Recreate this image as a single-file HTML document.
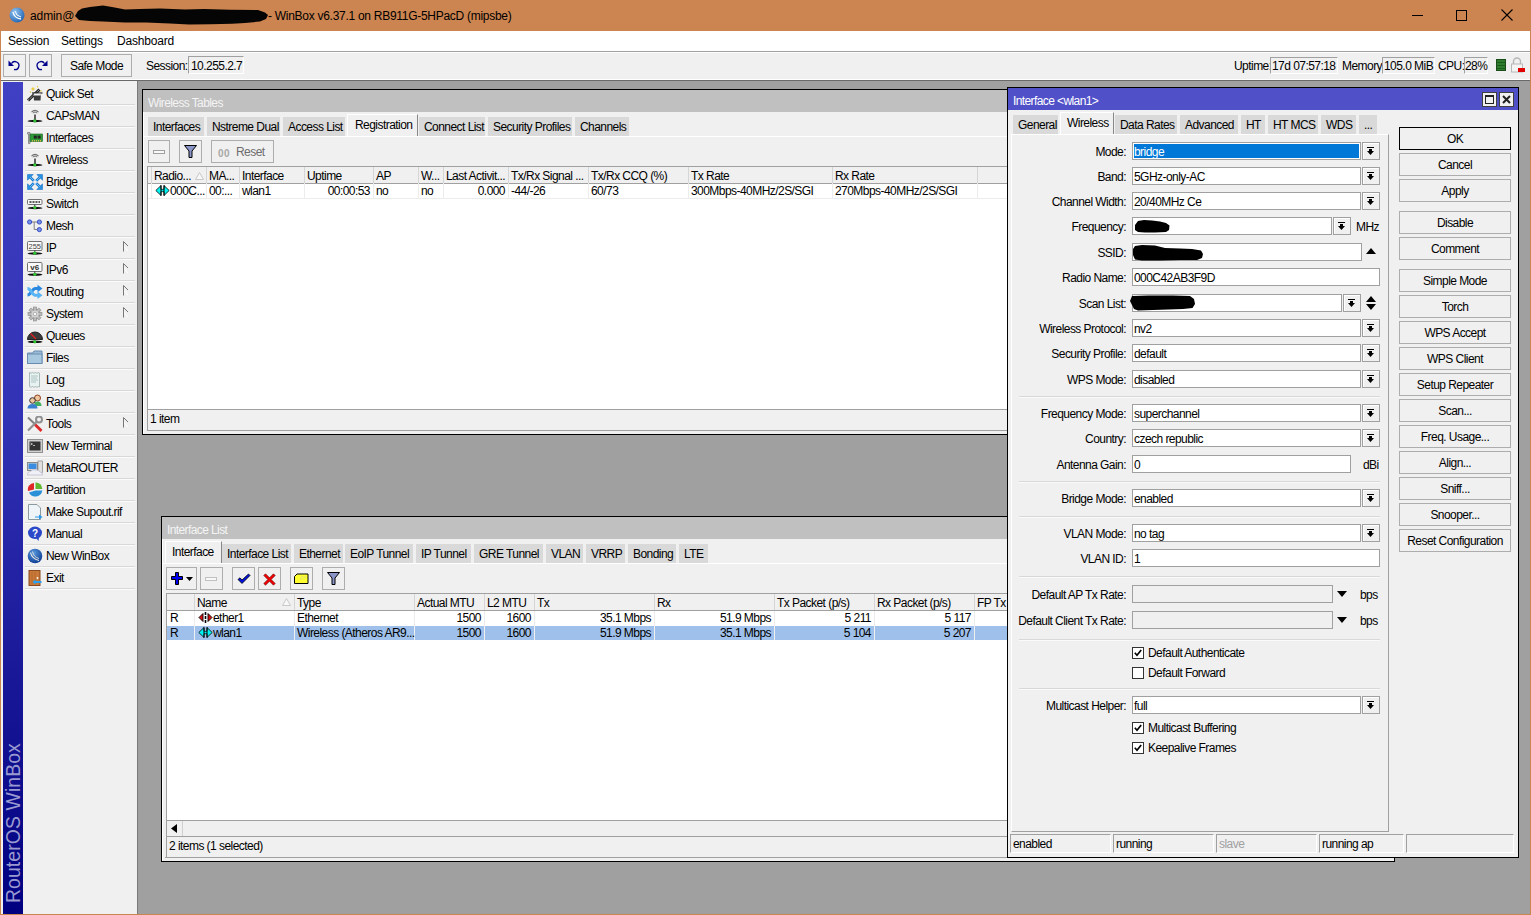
<!DOCTYPE html><html><head><meta charset="utf-8"><style>
*{box-sizing:border-box}
html,body{margin:0;padding:0}
body{width:1531px;height:915px;position:relative;overflow:hidden;background:#a0a0a0;font-family:"Liberation Sans",sans-serif;font-size:11px;color:#000}
.a{position:absolute}
.t{white-space:nowrap;line-height:13px;font-size:12px;letter-spacing:-0.55px}
.btn{background:#f0f0f0;border:1px solid #adadad}
.fld{background:#fff;border:1px solid #a0a0a0}
.sunk{background:#f0f0f0;border:1px solid #a0a0a0;border-right-color:#fff;border-bottom-color:#fff}
.tab{background:#d9d9d9;border-right:1px solid #f0f0f0}
.atab{background:#f0f0f0;border-left:1px solid #fff;border-top:1px solid #fff;border-right:1px solid #888}
.hc{background:#f0f0f0;border-right:1px solid #d5d5d5;border-bottom:1px solid #a0a0a0}
</style></head><body>
<div class="a " style="left:0px;top:0px;width:1531px;height:915px;background:#cc8450"></div>
<div class="a " style="left:1px;top:31px;width:1529px;height:883px;background:#f0f0f0"></div>
<svg class="a" style="left:9px;top:7px" width="16" height="16" viewBox="0 0 16 16"><defs><radialGradient id="wb" cx="0.35" cy="0.3" r="0.8"><stop offset="0" stop-color="#8fc3f0"/><stop offset="1" stop-color="#1b5fb0"/></radialGradient></defs><circle cx="8" cy="8" r="7.5" fill="url(#wb)"/><path d="M4 5 Q5 11 12 12" stroke="#fff" stroke-width="1.3" fill="none"/><path d="M6 4 Q7 9 12 10" stroke="#fff" stroke-width="1" fill="none"/></svg>
<div class="a t " style="left:30px;top:9px;font-size:12px;line-height:14px;color:#000;letter-spacing:-0.1px">admin@</div>
<svg class="a" style="left:0;top:0" width="280" height="31"><path d="M75 16 L78 11 L82 8.5 L90 7 L103 5.5 L112 7 L125 9.5 L140 9 L160 8.5 L185 9.5 L204 9 L230 9.8 L258 10 L265 12.5 L268 15 L266 19 L260 21.5 L245 23 L232 23.8 L210 24.2 L189 24.4 L170 23.5 L146 22.5 L125 22.5 L103 21.5 L90 21 L79 20 Z" fill="#050505"/></svg>
<div class="a t " style="left:268px;top:9px;font-size:12px;line-height:14px;color:#000;letter-spacing:-0.28px">- WinBox v6.37.1 on RB911G-5HPacD (mipsbe)</div>
<div class="a" style="left:1412px;top:15px;width:11px;height:1px;background:#000"></div>
<div class="a" style="left:1456px;top:10px;width:11px;height:11px;border:1px solid #000"></div>
<svg class="a" style="left:1501px;top:9px" width="12" height="12"><path d="M0.5 0.5L11.5 11.5M11.5 0.5L0.5 11.5" stroke="#000" stroke-width="1.1"/></svg>
<div class="a " style="left:1px;top:31px;width:1529px;height:20px;background:#fff"></div>
<div class="a " style="left:1px;top:51px;width:1529px;height:1px;background:#a0a0a0"></div>
<div class="a " style="left:1px;top:52px;width:1529px;height:1px;background:#fff"></div>
<div class="a t " style="left:8px;top:34px;font-size:12px;line-height:14px;letter-spacing:-0.2px">Session</div>
<div class="a t " style="left:61px;top:34px;font-size:12px;line-height:14px;letter-spacing:-0.2px">Settings</div>
<div class="a t " style="left:117px;top:34px;font-size:12px;line-height:14px;letter-spacing:-0.2px">Dashboard</div>
<div class="a " style="left:1px;top:53px;width:1529px;height:27px;background:#f0f0f0"></div>
<div class="a " style="left:1px;top:79px;width:1529px;height:1px;background:#fff"></div>
<div class="a " style="left:1px;top:80px;width:1529px;height:1px;background:#696969"></div>
<div class="a btn" style="left:3px;top:54px;width:23px;height:23px;"></div>
<div class="a btn" style="left:29px;top:54px;width:23px;height:23px;"></div>
<svg class="a" style="left:8px;top:59px" width="14" height="13" viewBox="0 0 14 13"><path d="M3.5 4.5 A4 4 0 1 1 6 10.5" stroke="#00008b" stroke-width="1.3" fill="none"/><path d="M0.5 1.5 L0.5 7 L6 7 Z" fill="#00008b"/></svg>
<svg class="a" style="left:34px;top:59px" width="14" height="13" viewBox="0 0 14 13"><path d="M10.5 4.5 A4 4 0 1 0 8 10.5" stroke="#00008b" stroke-width="1.3" fill="none"/><path d="M13.5 1.5 L13.5 7 L8 7 Z" fill="#00008b"/></svg>
<div class="a btn" style="left:61px;top:54px;width:71px;height:23px;"></div>
<div class="a t " style="left:70px;top:60px;">Safe Mode</div>
<div class="a t " style="left:146px;top:60px;">Session:</div>
<div class="a sunk" style="left:188px;top:56px;width:56px;height:18px;"></div>
<div class="a t " style="left:191px;top:60px;">10.255.2.7</div>
<div class="a t " style="left:1234px;top:60px;">Uptime:</div>
<div class="a sunk" style="left:1270px;top:57px;width:68px;height:17px;"></div>
<div class="a t " style="left:1272px;top:60px;">17d 07:57:18</div>
<div class="a t " style="left:1342px;top:60px;">Memory:</div>
<div class="a sunk" style="left:1382px;top:57px;width:53px;height:17px;"></div>
<div class="a t " style="left:1384px;top:60px;">105.0 MiB</div>
<div class="a t " style="left:1438px;top:60px;">CPU:</div>
<div class="a sunk" style="left:1464px;top:57px;width:24px;height:17px;"></div>
<div class="a t " style="left:1465px;top:60px;">28%</div>
<div class="a" style="left:1496px;top:59px;width:10px;height:12px;background:repeating-linear-gradient(#2e7d2e 0 2px,#1b5e1b 2px 3px);border:1px solid #1a4d1a"></div>
<svg class="a" style="left:1510px;top:57px" width="15" height="16" viewBox="0 0 15 16"><path d="M3.5 7 V4.5 A3.5 3.5 0 0 1 10.5 4.5 V7" stroke="#b8b8b8" stroke-width="1.4" fill="none"/><rect x="1.5" y="7" width="11" height="8" fill="#f4f4f4" stroke="#b8b8b8"/><rect x="8" y="11" width="7" height="4" fill="#e00000"/></svg>
<div class="a " style="left:1px;top:81px;width:136px;height:833px;background:#f0f0f0"></div>
<div class="a " style="left:137px;top:81px;width:1px;height:833px;background:#7a7a7a"></div>
<div class="a" style="left:3px;top:82px;width:20px;height:832px;background:linear-gradient(#4040c4,#3232b4 40%,#000080)"></div>
<div class="a t" style="left:2px;top:903px;transform-origin:0 0;transform:rotate(-90deg);font-size:19.4px;line-height:22px;color:#9a9ad0;letter-spacing:0.1px">RouterOS WinBox</div>
<div class="a t " style="left:46px;top:88px;">Quick Set</div>
<div class="a " style="left:25px;top:104px;width:110px;height:1px;background:#d8d8d8"></div>
<div class="a " style="left:25px;top:105px;width:110px;height:1px;background:#fbfbfb"></div>
<svg class="a" style="left:27px;top:86px" width="16" height="16" viewBox="0 0 16 16"><path d="M1 14.5 L12.5 3.5" stroke="#222" stroke-width="3"/><path d="M1 14.5 L12.5 3.5" stroke="#eee" stroke-width="1" stroke-dasharray="1.2 1.2"/><path d="M5 7 H15.5" stroke="#222" stroke-width="1.2"/><path d="M6.5 7.5 H14 L13.5 14.5 H7 Z" fill="#3a3a3a"/><rect x="6.8" y="7.5" width="7" height="2" fill="#f4f4f4"/><path d="M6 0.5 L6.7 2.3 L8.5 3 L6.7 3.7 L6 5.5 L5.3 3.7 L3.5 3 L5.3 2.3 Z" fill="#e8c830"/><circle cx="10.5" cy="0.8" r="0.7" fill="#e8c830"/><circle cx="14" cy="5" r="0.7" fill="#e8c830"/><circle cx="3.5" cy="6" r="0.8" fill="#e8c830"/></svg>
<div class="a t " style="left:46px;top:110px;">CAPsMAN</div>
<div class="a " style="left:25px;top:126px;width:110px;height:1px;background:#d8d8d8"></div>
<div class="a " style="left:25px;top:127px;width:110px;height:1px;background:#fbfbfb"></div>
<svg class="a" style="left:27px;top:108px" width="16" height="16" viewBox="0 0 16 16"><path d="M4.5 4.2 Q8 0.5 11.5 4.2" stroke="#707070" stroke-width="1.1" fill="none"/><path d="M5.8 5 Q8 3 10.2 5" stroke="#707070" stroke-width="1" fill="none"/><rect x="7" y="6.5" width="2" height="6" fill="#606060"/><ellipse cx="8" cy="13" rx="7.5" ry="1.2" fill="#111"/><circle cx="7.8" cy="12.8" r="1.6" fill="#2ec42e"/></svg>
<div class="a t " style="left:46px;top:132px;">Interfaces</div>
<div class="a " style="left:25px;top:148px;width:110px;height:1px;background:#d8d8d8"></div>
<div class="a " style="left:25px;top:149px;width:110px;height:1px;background:#fbfbfb"></div>
<svg class="a" style="left:27px;top:130px" width="16" height="16" viewBox="0 0 16 16"><path d="M0.5 2.5 H3 V13.5 H1.5 V4 H0.5 Z" fill="#c8c8c8" stroke="#707070" stroke-width="0.7"/><rect x="3" y="4" width="12.5" height="7.5" fill="#2e9a3a" stroke="#1a6020" stroke-width="0.6"/><rect x="6.8" y="5.6" width="3" height="3" fill="#222"/><rect x="10.6" y="5.6" width="3" height="3" fill="#222"/><path d="M5 10.8 H14.5" stroke="#d8b840" stroke-width="1.4" stroke-dasharray="1 1"/></svg>
<div class="a t " style="left:46px;top:154px;">Wireless</div>
<div class="a " style="left:25px;top:170px;width:110px;height:1px;background:#d8d8d8"></div>
<div class="a " style="left:25px;top:171px;width:110px;height:1px;background:#fbfbfb"></div>
<svg class="a" style="left:27px;top:152px" width="16" height="16" viewBox="0 0 16 16"><path d="M4.5 4.2 Q8 0.5 11.5 4.2" stroke="#707070" stroke-width="1.1" fill="none"/><path d="M5.8 5 Q8 3 10.2 5" stroke="#707070" stroke-width="1" fill="none"/><rect x="7" y="6.5" width="2" height="6" fill="#606060"/><ellipse cx="8" cy="13" rx="7.5" ry="1.2" fill="#111"/><circle cx="7.8" cy="12.8" r="1.6" fill="#2ec42e"/></svg>
<div class="a t " style="left:46px;top:176px;">Bridge</div>
<div class="a " style="left:25px;top:192px;width:110px;height:1px;background:#d8d8d8"></div>
<div class="a " style="left:25px;top:193px;width:110px;height:1px;background:#fbfbfb"></div>
<svg class="a" style="left:27px;top:174px" width="16" height="16" viewBox="0 0 16 16"><g transform=""><path d="M6.8 6.8 L2.8 2.8" stroke="#1a78d0" stroke-width="2.6"/><path d="M0.5 0.5 H6.2 L0.5 6.2 Z" fill="#2a90e0" stroke="#1a70c8" stroke-width="0.6"/><path d="M6.6 6.6 L3 3" stroke="#6cc4f8" stroke-width="1"/></g><g transform="translate(16,0) scale(-1,1)"><path d="M6.8 6.8 L2.8 2.8" stroke="#1a78d0" stroke-width="2.6"/><path d="M0.5 0.5 H6.2 L0.5 6.2 Z" fill="#2a90e0" stroke="#1a70c8" stroke-width="0.6"/><path d="M6.6 6.6 L3 3" stroke="#6cc4f8" stroke-width="1"/></g><g transform="translate(0,16) scale(1,-1)"><path d="M6.8 6.8 L2.8 2.8" stroke="#1a78d0" stroke-width="2.6"/><path d="M0.5 0.5 H6.2 L0.5 6.2 Z" fill="#2a90e0" stroke="#1a70c8" stroke-width="0.6"/><path d="M6.6 6.6 L3 3" stroke="#6cc4f8" stroke-width="1"/></g><g transform="translate(16,16) scale(-1,-1)"><path d="M6.8 6.8 L2.8 2.8" stroke="#1a78d0" stroke-width="2.6"/><path d="M0.5 0.5 H6.2 L0.5 6.2 Z" fill="#2a90e0" stroke="#1a70c8" stroke-width="0.6"/><path d="M6.6 6.6 L3 3" stroke="#6cc4f8" stroke-width="1"/></g></svg>
<div class="a t " style="left:46px;top:198px;">Switch</div>
<div class="a " style="left:25px;top:214px;width:110px;height:1px;background:#d8d8d8"></div>
<div class="a " style="left:25px;top:215px;width:110px;height:1px;background:#fbfbfb"></div>
<svg class="a" style="left:27px;top:196px" width="16" height="16" viewBox="0 0 16 16"><rect x="0.5" y="3.5" width="14.5" height="5" rx="1" fill="#f8f8f8" stroke="#707070"/><path d="M2.5 6 H13" stroke="#222" stroke-width="1.3" stroke-dasharray="2 1"/><rect x="7.3" y="8.5" width="1" height="3" fill="#333"/><ellipse cx="8" cy="12" rx="7.5" ry="1.2" fill="#111"/><circle cx="7.8" cy="11.5" r="1.6" fill="#2ec42e"/></svg>
<div class="a t " style="left:46px;top:220px;">Mesh</div>
<div class="a " style="left:25px;top:236px;width:110px;height:1px;background:#d8d8d8"></div>
<div class="a " style="left:25px;top:237px;width:110px;height:1px;background:#fbfbfb"></div>
<svg class="a" style="left:27px;top:218px" width="16" height="16" viewBox="0 0 16 16"><path d="M4.5 4 H10.5 M7.2 4 V11.5 H10.5" stroke="#808080" stroke-width="1" fill="none"/><g fill="#7890e8" stroke="#2a44c0" stroke-width="0.9"><circle cx="2.6" cy="4" r="2.1"/><circle cx="12.4" cy="4" r="2.1"/><circle cx="12.4" cy="11.6" r="2.1"/></g></svg>
<div class="a t " style="left:46px;top:242px;">IP</div>
<div class="a " style="left:25px;top:258px;width:110px;height:1px;background:#d8d8d8"></div>
<div class="a " style="left:25px;top:259px;width:110px;height:1px;background:#fbfbfb"></div>
<svg class="a" style="left:123px;top:241px" width="6" height="11"><path d="M0.5 5 L5 10" stroke="#fff" stroke-width="1"/><path d="M0.5 10.5 V0.5 L5 5" stroke="#777" stroke-width="1" fill="none"/></svg>
<svg class="a" style="left:27px;top:240px" width="16" height="16" viewBox="0 0 16 16"><rect x="0.5" y="1.5" width="14.5" height="9" rx="1" fill="#fafafa" stroke="#707070"/><text x="7.8" y="9" font-family="Liberation Sans" font-size="7.5" text-anchor="middle" fill="#444">255</text><rect x="7.3" y="10.5" width="1" height="2" fill="#333"/><ellipse cx="8" cy="13.5" rx="7.5" ry="1.2" fill="#111"/><circle cx="7.8" cy="13.2" r="1.6" fill="#2ec42e"/></svg>
<div class="a t " style="left:46px;top:264px;">IPv6</div>
<div class="a " style="left:25px;top:280px;width:110px;height:1px;background:#d8d8d8"></div>
<div class="a " style="left:25px;top:281px;width:110px;height:1px;background:#fbfbfb"></div>
<svg class="a" style="left:123px;top:263px" width="6" height="11"><path d="M0.5 5 L5 10" stroke="#fff" stroke-width="1"/><path d="M0.5 10.5 V0.5 L5 5" stroke="#777" stroke-width="1" fill="none"/></svg>
<svg class="a" style="left:27px;top:262px" width="16" height="16" viewBox="0 0 16 16"><rect x="0.5" y="0.5" width="14.5" height="9" rx="1" fill="#fafafa" stroke="#707070"/><text x="7.8" y="8" font-family="Liberation Sans" font-size="8" font-weight="bold" text-anchor="middle" fill="#333">v6</text><rect x="7.3" y="9.5" width="1" height="2" fill="#333"/><ellipse cx="8" cy="12.6" rx="7.5" ry="1.2" fill="#111"/><circle cx="7.8" cy="12.3" r="1.6" fill="#2ec42e"/></svg>
<div class="a t " style="left:46px;top:286px;">Routing</div>
<div class="a " style="left:25px;top:302px;width:110px;height:1px;background:#d8d8d8"></div>
<div class="a " style="left:25px;top:303px;width:110px;height:1px;background:#fbfbfb"></div>
<svg class="a" style="left:123px;top:285px" width="6" height="11"><path d="M0.5 5 L5 10" stroke="#fff" stroke-width="1"/><path d="M0.5 10.5 V0.5 L5 5" stroke="#777" stroke-width="1" fill="none"/></svg>
<svg class="a" style="left:27px;top:284px" width="16" height="16" viewBox="0 0 16 16"><path d="M0.5 11 C4 11 5 5 8 4.5 L11 4.5" stroke="#2a88e0" stroke-width="3" fill="none"/><path d="M0.5 4.5 C4 4.5 5 11 8 11.2 L11 11.2" stroke="#58b4f4" stroke-width="3" fill="none"/><path d="M10.5 0.8 L15.5 4.5 L10.5 8.2 Z" fill="#2a88e0"/><path d="M10.5 7.5 L15.5 11.2 L10.5 14.9 Z" fill="#58b4f4"/></svg>
<div class="a t " style="left:46px;top:308px;">System</div>
<div class="a " style="left:25px;top:324px;width:110px;height:1px;background:#d8d8d8"></div>
<div class="a " style="left:25px;top:325px;width:110px;height:1px;background:#fbfbfb"></div>
<svg class="a" style="left:123px;top:307px" width="6" height="11"><path d="M0.5 5 L5 10" stroke="#fff" stroke-width="1"/><path d="M0.5 10.5 V0.5 L5 5" stroke="#777" stroke-width="1" fill="none"/></svg>
<svg class="a" style="left:27px;top:306px" width="16" height="16" viewBox="0 0 16 16"><g transform="translate(8,8)"><g fill="#b8b8b8" stroke="#8a8a8a" stroke-width="0.6"><circle r="5.2"/><rect x="-1.6" y="-7" width="3.2" height="14"/><rect x="-1.6" y="-7" width="3.2" height="14" transform="rotate(45)"/><rect x="-1.6" y="-7" width="3.2" height="14" transform="rotate(90)"/><rect x="-1.6" y="-7" width="3.2" height="14" transform="rotate(135)"/></g><circle r="3.6" fill="#d8d8d8"/><circle r="1.8" fill="#f8f8f8" stroke="#888" stroke-width="0.6"/></g></svg>
<div class="a t " style="left:46px;top:330px;">Queues</div>
<div class="a " style="left:25px;top:346px;width:110px;height:1px;background:#d8d8d8"></div>
<div class="a " style="left:25px;top:347px;width:110px;height:1px;background:#fbfbfb"></div>
<svg class="a" style="left:27px;top:328px" width="16" height="16" viewBox="0 0 16 16"><path d="M0.5 11.5 A7.5 7.5 0 0 1 15.5 11.5 Z" fill="#3a3a3a" stroke="#222"/><path d="M3.5 5.5 L9 11" stroke="#e02020" stroke-width="1.3"/><ellipse cx="8" cy="13.8" rx="7.5" ry="1.2" fill="#111"/><circle cx="7.8" cy="13.8" r="1.6" fill="#2ec42e"/></svg>
<div class="a t " style="left:46px;top:352px;">Files</div>
<div class="a " style="left:25px;top:368px;width:110px;height:1px;background:#d8d8d8"></div>
<div class="a " style="left:25px;top:369px;width:110px;height:1px;background:#fbfbfb"></div>
<svg class="a" style="left:27px;top:350px" width="16" height="16" viewBox="0 0 16 16"><path d="M0.5 3 H6 L7 1 H15 V13.5 H0.5 Z" fill="#9bbcd8" stroke="#6a8cb0"/><rect x="0.5" y="4" width="14.5" height="9.5" fill="#a8c8e0" stroke="#6a8cb0"/></svg>
<div class="a t " style="left:46px;top:374px;">Log</div>
<div class="a " style="left:25px;top:390px;width:110px;height:1px;background:#d8d8d8"></div>
<div class="a " style="left:25px;top:391px;width:110px;height:1px;background:#fbfbfb"></div>
<svg class="a" style="left:27px;top:372px" width="16" height="16" viewBox="0 0 16 16"><path d="M2.5 0.5 L4 1.3 L5.5 0.5 L7 1.3 L8.5 0.5 L10 1.3 L11.5 0.5 L12.5 1 V15 L11.5 14.5 L10 15.3 L8.5 14.5 L7 15.3 L5.5 14.5 L4 15.3 L2.5 14.5 Z" fill="#e8f2f0" stroke="#8aa0a0" stroke-width="0.7"/><path d="M4 4 H11 M4 6 H10 M4 8 H11 M4 10 H9" stroke="#a0b8b8" stroke-width="0.8"/></svg>
<div class="a t " style="left:46px;top:396px;">Radius</div>
<div class="a " style="left:25px;top:412px;width:110px;height:1px;background:#d8d8d8"></div>
<div class="a " style="left:25px;top:413px;width:110px;height:1px;background:#fbfbfb"></div>
<svg class="a" style="left:27px;top:394px" width="16" height="16" viewBox="0 0 16 16"><circle cx="10.5" cy="4" r="3" fill="#f0c8a0" stroke="#904020" stroke-width="1"/><path d="M7 12 Q7 7.5 10.5 7.5 Q14.5 7.5 14.5 12 Z" fill="#40b060"/><circle cx="5.5" cy="6.5" r="2.8" fill="#f0c8a0" stroke="#303030" stroke-width="1"/><path d="M0.5 14.5 Q0.5 10 5.5 10 Q10.5 10 10.5 14.5 Z" fill="#3a80d0"/></svg>
<div class="a t " style="left:46px;top:418px;">Tools</div>
<div class="a " style="left:25px;top:434px;width:110px;height:1px;background:#d8d8d8"></div>
<div class="a " style="left:25px;top:435px;width:110px;height:1px;background:#fbfbfb"></div>
<svg class="a" style="left:123px;top:417px" width="6" height="11"><path d="M0.5 5 L5 10" stroke="#fff" stroke-width="1"/><path d="M0.5 10.5 V0.5 L5 5" stroke="#777" stroke-width="1" fill="none"/></svg>
<svg class="a" style="left:27px;top:416px" width="16" height="16" viewBox="0 0 16 16"><path d="M1 1.5 L14 14" stroke="#808080" stroke-width="2"/><path d="M8 8.5 L14.5 15" stroke="#e02828" stroke-width="2.8"/><path d="M1 14.5 L10.5 5" stroke="#909090" stroke-width="2.2"/><circle cx="12" cy="3.5" r="3" fill="none" stroke="#909090" stroke-width="2"/></svg>
<div class="a t " style="left:46px;top:440px;">New Terminal</div>
<div class="a " style="left:25px;top:456px;width:110px;height:1px;background:#d8d8d8"></div>
<div class="a " style="left:25px;top:457px;width:110px;height:1px;background:#fbfbfb"></div>
<svg class="a" style="left:27px;top:438px" width="16" height="16" viewBox="0 0 16 16"><rect x="0.5" y="1.5" width="15" height="13" fill="#d0d0d0" stroke="#909090"/><rect x="2.5" y="3.5" width="11" height="9" fill="#333"/><path d="M3.5 5 L5.5 6 L3.5 7 M6 7.5 H8" stroke="#eee" stroke-width="0.7" fill="none"/></svg>
<div class="a t " style="left:46px;top:462px;">MetaROUTER</div>
<div class="a " style="left:25px;top:478px;width:110px;height:1px;background:#d8d8d8"></div>
<div class="a " style="left:25px;top:479px;width:110px;height:1px;background:#fbfbfb"></div>
<svg class="a" style="left:27px;top:460px" width="16" height="16" viewBox="0 0 16 16"><rect x="0.5" y="2.5" width="10" height="8" fill="#d8d8d8" stroke="#888"/><rect x="1.5" y="3.5" width="8" height="5.5" fill="#3a8ce0"/><rect x="11" y="1" width="4.5" height="11.5" fill="#e0e0e0" stroke="#888" stroke-width="0.7"/><path d="M0.5 15 Q0 11.5 3.5 11.5 Q5 9 8.5 10 Q12 9.5 13 12 Q16 12 15.5 15 Z" fill="#f0f0f8" stroke="#b8b8c8" stroke-width="0.7"/></svg>
<div class="a t " style="left:46px;top:484px;">Partition</div>
<div class="a " style="left:25px;top:500px;width:110px;height:1px;background:#d8d8d8"></div>
<div class="a " style="left:25px;top:501px;width:110px;height:1px;background:#fbfbfb"></div>
<svg class="a" style="left:27px;top:482px" width="16" height="16" viewBox="0 0 16 16"><path d="M7 1 A6.5 6.5 0 0 0 1 9 L7 7.5 Z" fill="#e02828"/><path d="M8.5 0.5 A6.5 6.5 0 0 1 15.3 7 L8.5 7 Z" fill="#60b830"/><path d="M15.3 8.5 A7 7 0 0 1 2 10.5 L8.5 8.5 Z" fill="#2a90d8"/></svg>
<div class="a t " style="left:46px;top:506px;">Make Supout.rif</div>
<div class="a " style="left:25px;top:522px;width:110px;height:1px;background:#d8d8d8"></div>
<div class="a " style="left:25px;top:523px;width:110px;height:1px;background:#fbfbfb"></div>
<svg class="a" style="left:27px;top:504px" width="16" height="16" viewBox="0 0 16 16"><path d="M1.5 0.5 H10 L13.5 4 V15.5 H1.5 Z" fill="#eef4f8" stroke="#8a9aa0"/><path d="M8 12.5 H12 V10.5 L15.5 13 L12 15.5 V13.5 H8 Z" fill="#2a98e8"/></svg>
<div class="a t " style="left:46px;top:528px;">Manual</div>
<div class="a " style="left:25px;top:544px;width:110px;height:1px;background:#d8d8d8"></div>
<div class="a " style="left:25px;top:545px;width:110px;height:1px;background:#fbfbfb"></div>
<svg class="a" style="left:27px;top:526px" width="16" height="16" viewBox="0 0 16 16"><ellipse cx="8" cy="6.8" rx="7" ry="6.2" fill="#2a48c8"/><path d="M9 12 L11.5 15 L12 11" fill="#2a48c8"/><text x="8" y="10.5" font-family="Liberation Sans" font-size="10" font-weight="bold" text-anchor="middle" fill="#fff">?</text></svg>
<div class="a t " style="left:46px;top:550px;">New WinBox</div>
<div class="a " style="left:25px;top:566px;width:110px;height:1px;background:#d8d8d8"></div>
<div class="a " style="left:25px;top:567px;width:110px;height:1px;background:#fbfbfb"></div>
<svg class="a" style="left:27px;top:548px" width="16" height="16" viewBox="0 0 16 16"><defs><radialGradient id="wb2" cx="0.4" cy="0.3" r="0.75"><stop offset="0" stop-color="#5a9ae0"/><stop offset="1" stop-color="#0a3a90"/></radialGradient></defs><circle cx="8" cy="8" r="7.3" fill="url(#wb2)"/><path d="M3.5 4.5 Q5 11 12 12.5" stroke="#f0e8e0" stroke-width="1.1" fill="none"/><path d="M5.5 3.5 Q6.5 9 12 10.5" stroke="#e8e0d8" stroke-width="0.9" fill="none"/></svg>
<div class="a t " style="left:46px;top:572px;">Exit</div>
<div class="a " style="left:25px;top:588px;width:110px;height:1px;background:#d8d8d8"></div>
<div class="a " style="left:25px;top:589px;width:110px;height:1px;background:#fbfbfb"></div>
<svg class="a" style="left:27px;top:570px" width="16" height="16" viewBox="0 0 16 16"><rect x="2" y="0.5" width="11" height="15" fill="#c87838" stroke="#8a4a20"/><path d="M5 2 V14 M8 2 V14" stroke="#b06828" stroke-width="0.8"/><circle cx="10.5" cy="8" r="0.9" fill="#fff"/><path d="M5.5 12 L8.5 9.5 V11 H14.5 V13 H8.5 V14.5 Z" fill="#2aa0f0"/></svg>
<div class="a " style="left:138px;top:81px;width:1392px;height:833px;background:#a0a0a0"></div>
<div class="a " style="left:142px;top:89px;width:1000px;height:346px;background:#000"></div>
<div class="a " style="left:143px;top:90px;width:998px;height:344px;background:#fff"></div>
<div class="a " style="left:144px;top:91px;width:997px;height:343px;background:#f0f0f0"></div>
<div class="a " style="left:143px;top:90px;width:998px;height:22px;background:#c0c0c0"></div>
<div class="a t " style="left:148px;top:96px;color:#f4f4f4;font-size:12px;line-height:14px;letter-spacing:-0.6px">Wireless Tables</div>
<div class="a tab" style="left:148px;top:117px;width:57px;height:19px;"></div>
<div class="a t " style="left:153px;top:121px;">Interfaces</div>
<div class="a tab" style="left:207px;top:117px;width:74px;height:19px;"></div>
<div class="a t " style="left:212px;top:121px;">Nstreme Dual</div>
<div class="a tab" style="left:283px;top:117px;width:63px;height:19px;"></div>
<div class="a t " style="left:288px;top:121px;">Access List</div>
<div class="a atab" style="left:347px;top:114px;width:71px;height:23px;"></div>
<div class="a t " style="left:355px;top:119px;">Registration</div>
<div class="a tab" style="left:419px;top:117px;width:67px;height:19px;"></div>
<div class="a t " style="left:424px;top:121px;">Connect List</div>
<div class="a tab" style="left:488px;top:117px;width:85px;height:19px;"></div>
<div class="a t " style="left:493px;top:121px;">Security Profiles</div>
<div class="a tab" style="left:575px;top:117px;width:55px;height:19px;"></div>
<div class="a t " style="left:580px;top:121px;">Channels</div>
<div class="a " style="left:144px;top:136px;width:864px;height:1px;background:#fff"></div>
<div class="a btn" style="left:148px;top:140px;width:22px;height:23px;"></div>
<div class="a" style="left:153px;top:150px;width:12px;height:4px;border:1px solid #a0a0a0;background:#f8f8f8"></div>
<div class="a btn" style="left:179px;top:140px;width:23px;height:23px;"></div>
<svg class="a" style="left:184px;top:145px" width="13" height="13" viewBox="0 0 13 13"><path d="M0.5 0.5 H12.5 L8 6 V12.5 H5 V6 Z" fill="#8a96c8" stroke="#000" stroke-width="1"/></svg>
<div class="a btn" style="left:211px;top:140px;width:63px;height:23px;"></div>
<div class="a t " style="left:218px;top:147px;"><b style="color:#a8a8a8;font-size:10px;letter-spacing:0.5px">00</b></div>
<div class="a t " style="left:236px;top:146px;color:#6d6d6d">Reset</div>
<div class="a " style="left:147px;top:166px;width:861px;height:244px;background:#fff;border-top:1px solid #a0a0a0;border-left:1px solid #a0a0a0"></div>
<div class="a " style="left:148px;top:167px;width:860px;height:17px;background:#f0f0f0;border-bottom:1px solid #a0a0a0"></div>
<div class="a " style="left:151px;top:167px;width:1px;height:16px;background:#d5d5d5"></div>
<div class="a " style="left:206px;top:167px;width:1px;height:16px;background:#d5d5d5"></div>
<div class="a t " style="left:154px;top:170px;">Radio...</div>
<div class="a " style="left:206px;top:183px;width:1px;height:15px;background:#ececec"></div>
<div class="a " style="left:239px;top:167px;width:1px;height:16px;background:#d5d5d5"></div>
<div class="a t " style="left:209px;top:170px;">MA...</div>
<div class="a " style="left:239px;top:183px;width:1px;height:15px;background:#ececec"></div>
<div class="a " style="left:304px;top:167px;width:1px;height:16px;background:#d5d5d5"></div>
<div class="a t " style="left:242px;top:170px;">Interface</div>
<div class="a " style="left:304px;top:183px;width:1px;height:15px;background:#ececec"></div>
<div class="a " style="left:373px;top:167px;width:1px;height:16px;background:#d5d5d5"></div>
<div class="a t " style="left:307px;top:170px;">Uptime</div>
<div class="a " style="left:373px;top:183px;width:1px;height:15px;background:#ececec"></div>
<div class="a " style="left:418px;top:167px;width:1px;height:16px;background:#d5d5d5"></div>
<div class="a t " style="left:376px;top:170px;">AP</div>
<div class="a " style="left:418px;top:183px;width:1px;height:15px;background:#ececec"></div>
<div class="a " style="left:443px;top:167px;width:1px;height:16px;background:#d5d5d5"></div>
<div class="a t " style="left:421px;top:170px;">W...</div>
<div class="a " style="left:443px;top:183px;width:1px;height:15px;background:#ececec"></div>
<div class="a " style="left:508px;top:167px;width:1px;height:16px;background:#d5d5d5"></div>
<div class="a t " style="left:446px;top:170px;">Last Activit...</div>
<div class="a " style="left:508px;top:183px;width:1px;height:15px;background:#ececec"></div>
<div class="a " style="left:588px;top:167px;width:1px;height:16px;background:#d5d5d5"></div>
<div class="a t " style="left:511px;top:170px;">Tx/Rx Signal ...</div>
<div class="a " style="left:588px;top:183px;width:1px;height:15px;background:#ececec"></div>
<div class="a " style="left:688px;top:167px;width:1px;height:16px;background:#d5d5d5"></div>
<div class="a t " style="left:591px;top:170px;">Tx/Rx CCQ (%)</div>
<div class="a " style="left:688px;top:183px;width:1px;height:15px;background:#ececec"></div>
<div class="a " style="left:832px;top:167px;width:1px;height:16px;background:#d5d5d5"></div>
<div class="a t " style="left:691px;top:170px;">Tx Rate</div>
<div class="a " style="left:832px;top:183px;width:1px;height:15px;background:#ececec"></div>
<div class="a " style="left:977px;top:167px;width:1px;height:16px;background:#d5d5d5"></div>
<div class="a t " style="left:835px;top:170px;">Rx Rate</div>
<div class="a " style="left:977px;top:183px;width:1px;height:15px;background:#ececec"></div>
<div class="a " style="left:1100px;top:167px;width:1px;height:16px;background:#d5d5d5"></div>
<div class="a t " style="left:980px;top:170px;"></div>
<div class="a " style="left:1100px;top:183px;width:1px;height:15px;background:#ececec"></div>
<div class="a " style="left:151px;top:183px;width:1px;height:15px;background:#ececec"></div>
<div class="a " style="left:148px;top:198px;width:860px;height:1px;background:#ececec"></div>
<svg class="a" style="left:195px;top:172px" width="9" height="8"><path d="M4.5 0.5 L8.5 7.5 H0.5 Z" fill="#f8f8f8" stroke="#c8c8c8"/></svg>
<div class="a t " style="left:170px;top:185px;">000C...</div>
<div class="a t " style="left:209px;top:185px;">00:...</div>
<div class="a t " style="left:242px;top:185px;">wlan1</div>
<div class="a t" style="left:304px;top:185px;width:66px;text-align:right">00:00:53</div>
<div class="a t " style="left:376px;top:185px;">no</div>
<div class="a t " style="left:421px;top:185px;">no</div>
<div class="a t" style="left:443px;top:185px;width:62px;text-align:right">0.000</div>
<div class="a t " style="left:511px;top:185px;">-44/-26</div>
<div class="a t " style="left:591px;top:185px;">60/73</div>
<div class="a t " style="left:691px;top:185px;">300Mbps-40MHz/2S/SGI</div>
<div class="a t " style="left:835px;top:185px;">270Mbps-40MHz/2S/SGI</div>
<div class="a t " style="left:980px;top:185px;"></div>
<svg class="a" style="left:155px;top:185px" width="15" height="11" viewBox="0 0 15 11"><path d="M0.8 5.5 L6 0.5 V10.5 Z M14.2 5.5 L9 0.5 V10.5 Z" fill="#00f4f4" stroke="#000" stroke-width="0.8"/><path d="M5 4.2 H10 V6.8 H5 Z" fill="#00f4f4"/><path d="M6 4.3 H9 M6 6.7 H9" stroke="#000" stroke-width="0.7"/><path d="M6 0.3 V10.7 M9 0.3 V10.7" stroke="#000" stroke-width="1"/></svg>
<div class="a " style="left:147px;top:409px;width:861px;height:1px;background:#a0a0a0"></div>
<div class="a t " style="left:150px;top:413px;">1 item</div>
<div class="a " style="left:147px;top:430px;width:861px;height:1px;background:#a0a0a0"></div>
<div class="a " style="left:147px;top:166px;width:1px;height:264px;background:#a0a0a0"></div>
<div class="a " style="left:161px;top:516px;width:1234px;height:346px;background:#000"></div>
<div class="a " style="left:162px;top:517px;width:1232px;height:344px;background:#fff"></div>
<div class="a " style="left:163px;top:518px;width:1231px;height:343px;background:#f0f0f0"></div>
<div class="a " style="left:162px;top:517px;width:1232px;height:22px;background:#c0c0c0"></div>
<div class="a t " style="left:167px;top:523px;color:#f4f4f4;font-size:12px;line-height:14px;letter-spacing:-0.6px">Interface List</div>
<div class="a atab" style="left:165px;top:541px;width:57px;height:23px;"></div>
<div class="a t " style="left:172px;top:546px;">Interface</div>
<div class="a tab" style="left:222px;top:544px;width:70px;height:19px;"></div>
<div class="a t " style="left:227px;top:548px;">Interface List</div>
<div class="a tab" style="left:294px;top:544px;width:50px;height:19px;"></div>
<div class="a t " style="left:299px;top:548px;">Ethernet</div>
<div class="a tab" style="left:345px;top:544px;width:69px;height:19px;"></div>
<div class="a t " style="left:350px;top:548px;">EoIP Tunnel</div>
<div class="a tab" style="left:416px;top:544px;width:56px;height:19px;"></div>
<div class="a t " style="left:421px;top:548px;">IP Tunnel</div>
<div class="a tab" style="left:474px;top:544px;width:70px;height:19px;"></div>
<div class="a t " style="left:479px;top:548px;">GRE Tunnel</div>
<div class="a tab" style="left:546px;top:544px;width:38px;height:19px;"></div>
<div class="a t " style="left:551px;top:548px;">VLAN</div>
<div class="a tab" style="left:586px;top:544px;width:40px;height:19px;"></div>
<div class="a t " style="left:591px;top:548px;">VRRP</div>
<div class="a tab" style="left:628px;top:544px;width:49px;height:19px;"></div>
<div class="a t " style="left:633px;top:548px;">Bonding</div>
<div class="a tab" style="left:679px;top:544px;width:30px;height:19px;"></div>
<div class="a t " style="left:684px;top:548px;">LTE</div>
<div class="a " style="left:163px;top:563px;width:1230px;height:1px;background:#fff"></div>
<div class="a btn" style="left:166px;top:567px;width:31px;height:23px;"></div>
<div class="a btn" style="left:200px;top:567px;width:23px;height:23px;"></div>
<div class="a btn" style="left:232px;top:567px;width:23px;height:23px;"></div>
<div class="a btn" style="left:258px;top:567px;width:23px;height:23px;"></div>
<div class="a btn" style="left:290px;top:567px;width:23px;height:23px;"></div>
<div class="a btn" style="left:322px;top:567px;width:23px;height:23px;"></div>
<svg class="a" style="left:171px;top:572px" width="23" height="14" viewBox="0 0 23 14"><path d="M4.5 0.5 H7.5 V4.5 H11.5 V7.5 H7.5 V12.5 H4.5 V7.5 H0.5 V4.5 H4.5 Z" fill="#0000f0" stroke="#000" stroke-width="1"/><path d="M15 5 H22 L18.5 9 Z" fill="#000"/></svg>
<div class="a" style="left:205px;top:577px;width:12px;height:4px;border:1px solid #c0c0c0;background:#f8f8f8"></div>
<svg class="a" style="left:237px;top:573px" width="14" height="12" viewBox="0 0 14 12"><path d="M1 6.5 L3 4.8 L5 7 L11.5 1 L13 2.5 L5 10.5 Z" fill="#0010e0" stroke="#000" stroke-width="0.8"/></svg>
<svg class="a" style="left:263px;top:573px" width="13" height="13" viewBox="0 0 13 13"><path d="M0.8 2.5 L2.5 0.8 L6.5 4.8 L10.5 0.8 L12.2 2.5 L8.2 6.5 L12.2 10.5 L10.5 12.2 L6.5 8.2 L2.5 12.2 L0.8 10.5 L4.8 6.5 Z" fill="#f00000" stroke="#600" stroke-width="0.6"/></svg>
<svg class="a" style="left:294px;top:573px" width="15" height="12" viewBox="0 0 15 12"><path d="M0.5 3.5 L3 1 H14 V10.5 H0.5 Z" fill="#ffff30" stroke="#000" stroke-width="1"/><path d="M7 4 H12 M6 6 H10" stroke="#c8c8a0" stroke-width="0.8" stroke-dasharray="2 1"/></svg>
<svg class="a" style="left:327px;top:572px" width="13" height="13" viewBox="0 0 13 13"><path d="M0.5 0.5 H12.5 L8 6 V12.5 H5 V6 Z" fill="#8a96c8" stroke="#000" stroke-width="1"/></svg>
<div class="a " style="left:166px;top:593px;width:1228px;height:228px;background:#fff;border-top:1px solid #a0a0a0;border-left:1px solid #a0a0a0"></div>
<div class="a " style="left:167px;top:594px;width:1226px;height:17px;background:#f0f0f0;border-bottom:1px solid #a0a0a0"></div>
<div class="a " style="left:194px;top:594px;width:1px;height:16px;background:#d5d5d5"></div>
<div class="a t " style="left:170px;top:597px;"></div>
<div class="a " style="left:294px;top:594px;width:1px;height:16px;background:#d5d5d5"></div>
<div class="a t " style="left:197px;top:597px;">Name</div>
<div class="a " style="left:414px;top:594px;width:1px;height:16px;background:#d5d5d5"></div>
<div class="a t " style="left:297px;top:597px;">Type</div>
<div class="a " style="left:484px;top:594px;width:1px;height:16px;background:#d5d5d5"></div>
<div class="a t " style="left:417px;top:597px;">Actual MTU</div>
<div class="a " style="left:534px;top:594px;width:1px;height:16px;background:#d5d5d5"></div>
<div class="a t " style="left:487px;top:597px;">L2 MTU</div>
<div class="a " style="left:654px;top:594px;width:1px;height:16px;background:#d5d5d5"></div>
<div class="a t " style="left:537px;top:597px;">Tx</div>
<div class="a " style="left:774px;top:594px;width:1px;height:16px;background:#d5d5d5"></div>
<div class="a t " style="left:657px;top:597px;">Rx</div>
<div class="a " style="left:874px;top:594px;width:1px;height:16px;background:#d5d5d5"></div>
<div class="a t " style="left:777px;top:597px;">Tx Packet (p/s)</div>
<div class="a " style="left:974px;top:594px;width:1px;height:16px;background:#d5d5d5"></div>
<div class="a t " style="left:877px;top:597px;">Rx Packet (p/s)</div>
<div class="a " style="left:1100px;top:594px;width:1px;height:16px;background:#d5d5d5"></div>
<div class="a t " style="left:977px;top:597px;">FP Tx</div>
<div class="a " style="left:1393px;top:594px;width:1px;height:16px;background:#d5d5d5"></div>
<div class="a t " style="left:1103px;top:597px;"></div>
<svg class="a" style="left:282px;top:598px" width="9" height="8"><path d="M4.5 0.5 L8.5 7.5 H0.5 Z" fill="#f8f8f8" stroke="#c8c8c8"/></svg>
<div class="a " style="left:194px;top:611px;width:1px;height:15px;background:#ececec"></div>
<div class="a t " style="left:170px;top:612px;">R</div>
<div class="a " style="left:294px;top:611px;width:1px;height:15px;background:#ececec"></div>
<div class="a t " style="left:213px;top:612px;">ether1</div>
<div class="a " style="left:414px;top:611px;width:1px;height:15px;background:#ececec"></div>
<div class="a t " style="left:297px;top:612px;">Ethernet</div>
<div class="a " style="left:484px;top:611px;width:1px;height:15px;background:#ececec"></div>
<div class="a t" style="left:414px;top:612px;width:67px;text-align:right">1500</div>
<div class="a " style="left:534px;top:611px;width:1px;height:15px;background:#ececec"></div>
<div class="a t" style="left:484px;top:612px;width:47px;text-align:right">1600</div>
<div class="a " style="left:654px;top:611px;width:1px;height:15px;background:#ececec"></div>
<div class="a t" style="left:534px;top:612px;width:117px;text-align:right">35.1 Mbps</div>
<div class="a " style="left:774px;top:611px;width:1px;height:15px;background:#ececec"></div>
<div class="a t" style="left:654px;top:612px;width:117px;text-align:right">51.9 Mbps</div>
<div class="a " style="left:874px;top:611px;width:1px;height:15px;background:#ececec"></div>
<div class="a t" style="left:774px;top:612px;width:97px;text-align:right">5 211</div>
<div class="a " style="left:974px;top:611px;width:1px;height:15px;background:#ececec"></div>
<div class="a t" style="left:874px;top:612px;width:97px;text-align:right">5 117</div>
<div class="a " style="left:1100px;top:611px;width:1px;height:15px;background:#ececec"></div>
<div class="a t " style="left:977px;top:612px;"></div>
<div class="a " style="left:1393px;top:611px;width:1px;height:15px;background:#ececec"></div>
<div class="a t " style="left:1103px;top:612px;"></div>
<div class="a " style="left:167px;top:626px;width:1226px;height:14px;background:#9fc0ea"></div>
<div class="a " style="left:194px;top:626px;width:1px;height:14px;background:#f0f0f0"></div>
<div class="a t " style="left:170px;top:627px;">R</div>
<div class="a " style="left:294px;top:626px;width:1px;height:14px;background:#f0f0f0"></div>
<div class="a t " style="left:213px;top:627px;">wlan1</div>
<div class="a " style="left:414px;top:626px;width:1px;height:14px;background:#f0f0f0"></div>
<div class="a t " style="left:297px;top:627px;">Wireless (Atheros AR9...</div>
<div class="a " style="left:484px;top:626px;width:1px;height:14px;background:#f0f0f0"></div>
<div class="a t" style="left:414px;top:627px;width:67px;text-align:right">1500</div>
<div class="a " style="left:534px;top:626px;width:1px;height:14px;background:#f0f0f0"></div>
<div class="a t" style="left:484px;top:627px;width:47px;text-align:right">1600</div>
<div class="a " style="left:654px;top:626px;width:1px;height:14px;background:#f0f0f0"></div>
<div class="a t" style="left:534px;top:627px;width:117px;text-align:right">51.9 Mbps</div>
<div class="a " style="left:774px;top:626px;width:1px;height:14px;background:#f0f0f0"></div>
<div class="a t" style="left:654px;top:627px;width:117px;text-align:right">35.1 Mbps</div>
<div class="a " style="left:874px;top:626px;width:1px;height:14px;background:#f0f0f0"></div>
<div class="a t" style="left:774px;top:627px;width:97px;text-align:right">5 104</div>
<div class="a " style="left:974px;top:626px;width:1px;height:14px;background:#f0f0f0"></div>
<div class="a t" style="left:874px;top:627px;width:97px;text-align:right">5 207</div>
<div class="a " style="left:1100px;top:626px;width:1px;height:14px;background:#f0f0f0"></div>
<div class="a t " style="left:977px;top:627px;"></div>
<div class="a " style="left:1393px;top:626px;width:1px;height:14px;background:#f0f0f0"></div>
<div class="a t " style="left:1103px;top:627px;"></div>
<svg class="a" style="left:198px;top:612px" width="15" height="11" viewBox="0 0 15 11"><path d="M1 5.5 L5 1.5 V9.5 Z M14 5.5 L10 1.5 V9.5 Z" fill="#e01010" stroke="#000" stroke-width="0.9"/><path d="M7.5 0 V11" stroke="#000" stroke-width="1.6" stroke-dasharray="3 1"/></svg>
<svg class="a" style="left:198px;top:627px" width="15" height="11" viewBox="0 0 15 11"><path d="M0.8 5.5 L6 0.5 V10.5 Z M14.2 5.5 L9 0.5 V10.5 Z" fill="#00f4f4" stroke="#000" stroke-width="0.8"/><path d="M5 4.2 H10 V6.8 H5 Z" fill="#00f4f4"/><path d="M6 4.3 H9 M6 6.7 H9" stroke="#000" stroke-width="0.7"/><path d="M6 0.3 V10.7 M9 0.3 V10.7" stroke="#000" stroke-width="1"/></svg>
<div class="a " style="left:166px;top:820px;width:1228px;height:1px;background:#a0a0a0"></div>
<div class="a " style="left:167px;top:821px;width:1226px;height:15px;background:#f0f0f0"></div>
<div class="a " style="left:182px;top:821px;width:1px;height:15px;background:#d0d0d0"></div>
<svg class="a" style="left:171px;top:824px" width="7" height="9"><path d="M0 4.5 L6 0 V9 Z" fill="#000"/></svg>
<div class="a " style="left:166px;top:836px;width:1228px;height:1px;background:#a0a0a0"></div>
<div class="a t " style="left:169px;top:840px;">2 items (1 selected)</div>
<div class="a " style="left:165px;top:857px;width:1228px;height:1px;background:#a0a0a0"></div>
<div class="a " style="left:166px;top:593px;width:1px;height:264px;background:#a0a0a0"></div>
<div class="a " style="left:1007px;top:87px;width:512px;height:771px;background:#000"></div>
<div class="a " style="left:1008px;top:88px;width:510px;height:769px;background:#f0f0f0"></div>
<div class="a " style="left:1008px;top:88px;width:510px;height:22px;background:#5050c8"></div>
<div class="a t " style="left:1013px;top:94px;color:#fff;font-size:12px;line-height:14px;letter-spacing:-0.6px">Interface &lt;wlan1&gt;</div>
<div class="a " style="left:1482px;top:92px;width:15px;height:15px;background:#f0f0f0;border:1px solid #404040"></div>
<div class="a " style="left:1485px;top:95px;width:9px;height:9px;border:1px solid #202020;border-top-width:2px"></div>
<div class="a " style="left:1499px;top:92px;width:15px;height:15px;background:#f0f0f0;border:1px solid #404040"></div>
<svg class="a" style="left:1502px;top:95px" width="9" height="9"><path d="M1 1 L8 8 M8 1 L1 8" stroke="#202020" stroke-width="2"/></svg>
<div class="a tab" style="left:1013px;top:115px;width:46px;height:19px;"></div>
<div class="a t " style="left:1018px;top:119px;">General</div>
<div class="a atab" style="left:1060px;top:112px;width:54px;height:23px;"></div>
<div class="a t " style="left:1067px;top:117px;">Wireless</div>
<div class="a tab" style="left:1115px;top:115px;width:63px;height:19px;"></div>
<div class="a t " style="left:1120px;top:119px;">Data Rates</div>
<div class="a tab" style="left:1180px;top:115px;width:59px;height:19px;"></div>
<div class="a t " style="left:1185px;top:119px;">Advanced</div>
<div class="a tab" style="left:1241px;top:115px;width:25px;height:19px;"></div>
<div class="a t " style="left:1246px;top:119px;">HT</div>
<div class="a tab" style="left:1268px;top:115px;width:51px;height:19px;"></div>
<div class="a t " style="left:1273px;top:119px;">HT MCS</div>
<div class="a tab" style="left:1321px;top:115px;width:36px;height:19px;"></div>
<div class="a t " style="left:1326px;top:119px;">WDS</div>
<div class="a tab" style="left:1359px;top:115px;width:19px;height:19px;"></div>
<div class="a t " style="left:1364px;top:119px;">...</div>
<div class="a " style="left:1011px;top:134px;width:378px;height:698px;border-left:1px solid #fff;border-top:1px solid #fff;border-right:1px solid #a0a0a0;border-bottom:1px solid #a0a0a0"></div>
<div class="a t" style="left:1000px;top:146px;width:126px;text-align:right;">Mode:</div>
<div class="a fld" style="left:1132px;top:142px;width:229px;height:18px;"></div>
<div class="a " style="left:1134px;top:144px;width:225px;height:14px;background:#0078d7"></div>
<div class="a t " style="left:1134px;top:146px;color:#fff">bridge</div>
<div class="a " style="left:1362px;top:142px;width:18px;height:18px;background:#f0f0f0;border:1px solid #a0a0a0;box-shadow:inset 1px 1px 0 #fff"></div>
<svg class="a" style="left:1367px;top:147px" width="7" height="9"><path d="M0 0 H7 V1 H0 Z M2 2 H5 V4 H7 L3.5 8 L0 4 H2 Z" fill="#000"/></svg>
<div class="a t" style="left:1000px;top:171px;width:126px;text-align:right;">Band:</div>
<div class="a fld" style="left:1132px;top:167px;width:229px;height:18px;"></div>
<div class="a t " style="left:1134px;top:171px;">5GHz-only-AC</div>
<div class="a " style="left:1362px;top:167px;width:18px;height:18px;background:#f0f0f0;border:1px solid #a0a0a0;box-shadow:inset 1px 1px 0 #fff"></div>
<svg class="a" style="left:1367px;top:172px" width="7" height="9"><path d="M0 0 H7 V1 H0 Z M2 2 H5 V4 H7 L3.5 8 L0 4 H2 Z" fill="#000"/></svg>
<div class="a t" style="left:1000px;top:196px;width:126px;text-align:right;">Channel Width:</div>
<div class="a fld" style="left:1132px;top:192px;width:229px;height:18px;"></div>
<div class="a t " style="left:1134px;top:196px;">20/40MHz Ce</div>
<div class="a " style="left:1362px;top:192px;width:18px;height:18px;background:#f0f0f0;border:1px solid #a0a0a0;box-shadow:inset 1px 1px 0 #fff"></div>
<svg class="a" style="left:1367px;top:197px" width="7" height="9"><path d="M0 0 H7 V1 H0 Z M2 2 H5 V4 H7 L3.5 8 L0 4 H2 Z" fill="#000"/></svg>
<div class="a t" style="left:1000px;top:221px;width:126px;text-align:right;">Frequency:</div>
<div class="a fld" style="left:1132px;top:217px;width:200px;height:18px;"></div>
<div class="a t " style="left:1134px;top:221px;"></div>
<div class="a " style="left:1333px;top:217px;width:18px;height:18px;background:#f0f0f0;border:1px solid #a0a0a0;box-shadow:inset 1px 1px 0 #fff"></div>
<svg class="a" style="left:1338px;top:222px" width="7" height="9"><path d="M0 0 H7 V1 H0 Z M2 2 H5 V4 H7 L3.5 8 L0 4 H2 Z" fill="#000"/></svg>
<div class="a t " style="left:1356px;top:221px;">MHz</div>
<div class="a t" style="left:1000px;top:247px;width:126px;text-align:right;">SSID:</div>
<div class="a fld" style="left:1132px;top:243px;width:230px;height:18px;background:#fff"></div>
<div class="a t " style="left:1134px;top:247px;"></div>
<svg class="a" style="left:1130px;top:215px" width="80" height="50"><path d="M5 10 L8 6 L14 5 L22 5.5 L30 6.5 L36 8 L39.5 10.5 L39 15 L36 17 L25 17.5 L15 17.5 L8 17 L5 15 Z" fill="#000"/><path d="M3 34 L5 31 L12 30 L25 30.5 L35 33 L50 33.5 L62 34 L71 35.5 L73 39 L72 43 L67 45 L50 45 L30 45.5 L12 45.5 L5 44.5 L3 40 Z" fill="#000"/></svg>
<svg class="a" style="left:1366px;top:248px" width="10" height="6"><path d="M0 6 L5 0 L10 6 Z" fill="#000"/></svg>
<div class="a t" style="left:1000px;top:272px;width:126px;text-align:right;">Radio Name:</div>
<div class="a fld" style="left:1132px;top:268px;width:248px;height:18px;background:#fff"></div>
<div class="a t " style="left:1134px;top:272px;">000C42AB3F9D</div>
<div class="a t" style="left:1000px;top:298px;width:126px;text-align:right;">Scan List:</div>
<div class="a fld" style="left:1132px;top:294px;width:210px;height:18px;"></div>
<div class="a t " style="left:1134px;top:298px;"></div>
<div class="a " style="left:1343px;top:294px;width:18px;height:18px;background:#f0f0f0;border:1px solid #a0a0a0;box-shadow:inset 1px 1px 0 #fff"></div>
<svg class="a" style="left:1348px;top:299px" width="7" height="9"><path d="M0 0 H7 V1 H0 Z M2 2 H5 V4 H7 L3.5 8 L0 4 H2 Z" fill="#000"/></svg>
<svg class="a" style="left:1128px;top:293px" width="70" height="20"><path d="M4 3 L20 2.5 L45 2.5 L62 3 L66 6 L67 11 L64.5 15 L55 16 L40 16.5 L25 17 L10 17.5 L6 16 L4 12 L2 8 Z" fill="#000"/></svg>
<svg class="a" style="left:1366px;top:296px" width="10" height="14"><path d="M0 6 L5 0 L10 6 Z M0 8 L5 14 L10 8 Z" fill="#000"/></svg>
<div class="a t" style="left:1000px;top:323px;width:126px;text-align:right;">Wireless Protocol:</div>
<div class="a fld" style="left:1132px;top:319px;width:229px;height:18px;"></div>
<div class="a t " style="left:1134px;top:323px;">nv2</div>
<div class="a " style="left:1362px;top:319px;width:18px;height:18px;background:#f0f0f0;border:1px solid #a0a0a0;box-shadow:inset 1px 1px 0 #fff"></div>
<svg class="a" style="left:1367px;top:324px" width="7" height="9"><path d="M0 0 H7 V1 H0 Z M2 2 H5 V4 H7 L3.5 8 L0 4 H2 Z" fill="#000"/></svg>
<div class="a t" style="left:1000px;top:348px;width:126px;text-align:right;">Security Profile:</div>
<div class="a fld" style="left:1132px;top:344px;width:229px;height:18px;"></div>
<div class="a t " style="left:1134px;top:348px;">default</div>
<div class="a " style="left:1362px;top:344px;width:18px;height:18px;background:#f0f0f0;border:1px solid #a0a0a0;box-shadow:inset 1px 1px 0 #fff"></div>
<svg class="a" style="left:1367px;top:349px" width="7" height="9"><path d="M0 0 H7 V1 H0 Z M2 2 H5 V4 H7 L3.5 8 L0 4 H2 Z" fill="#000"/></svg>
<div class="a t" style="left:1000px;top:374px;width:126px;text-align:right;">WPS Mode:</div>
<div class="a fld" style="left:1132px;top:370px;width:229px;height:18px;"></div>
<div class="a t " style="left:1134px;top:374px;">disabled</div>
<div class="a " style="left:1362px;top:370px;width:18px;height:18px;background:#f0f0f0;border:1px solid #a0a0a0;box-shadow:inset 1px 1px 0 #fff"></div>
<svg class="a" style="left:1367px;top:375px" width="7" height="9"><path d="M0 0 H7 V1 H0 Z M2 2 H5 V4 H7 L3.5 8 L0 4 H2 Z" fill="#000"/></svg>
<div class="a " style="left:1019px;top:396px;width:361px;height:1px;background:#d8d8d8"></div>
<div class="a " style="left:1019px;top:397px;width:361px;height:1px;background:#fafafa"></div>
<div class="a t" style="left:1000px;top:408px;width:126px;text-align:right;">Frequency Mode:</div>
<div class="a fld" style="left:1132px;top:404px;width:229px;height:18px;"></div>
<div class="a t " style="left:1134px;top:408px;">superchannel</div>
<div class="a " style="left:1362px;top:404px;width:18px;height:18px;background:#f0f0f0;border:1px solid #a0a0a0;box-shadow:inset 1px 1px 0 #fff"></div>
<svg class="a" style="left:1367px;top:409px" width="7" height="9"><path d="M0 0 H7 V1 H0 Z M2 2 H5 V4 H7 L3.5 8 L0 4 H2 Z" fill="#000"/></svg>
<div class="a t" style="left:1000px;top:433px;width:126px;text-align:right;">Country:</div>
<div class="a fld" style="left:1132px;top:429px;width:229px;height:18px;"></div>
<div class="a t " style="left:1134px;top:433px;">czech republic</div>
<div class="a " style="left:1362px;top:429px;width:18px;height:18px;background:#f0f0f0;border:1px solid #a0a0a0;box-shadow:inset 1px 1px 0 #fff"></div>
<svg class="a" style="left:1367px;top:434px" width="7" height="9"><path d="M0 0 H7 V1 H0 Z M2 2 H5 V4 H7 L3.5 8 L0 4 H2 Z" fill="#000"/></svg>
<div class="a t" style="left:1000px;top:459px;width:126px;text-align:right;">Antenna Gain:</div>
<div class="a fld" style="left:1132px;top:455px;width:219px;height:18px;background:#fff"></div>
<div class="a t " style="left:1134px;top:459px;">0</div>
<div class="a t " style="left:1363px;top:459px;">dBi</div>
<div class="a " style="left:1019px;top:481px;width:361px;height:1px;background:#d8d8d8"></div>
<div class="a " style="left:1019px;top:482px;width:361px;height:1px;background:#fafafa"></div>
<div class="a t" style="left:1000px;top:493px;width:126px;text-align:right;">Bridge Mode:</div>
<div class="a fld" style="left:1132px;top:489px;width:229px;height:18px;"></div>
<div class="a t " style="left:1134px;top:493px;">enabled</div>
<div class="a " style="left:1362px;top:489px;width:18px;height:18px;background:#f0f0f0;border:1px solid #a0a0a0;box-shadow:inset 1px 1px 0 #fff"></div>
<svg class="a" style="left:1367px;top:494px" width="7" height="9"><path d="M0 0 H7 V1 H0 Z M2 2 H5 V4 H7 L3.5 8 L0 4 H2 Z" fill="#000"/></svg>
<div class="a " style="left:1019px;top:516px;width:361px;height:1px;background:#d8d8d8"></div>
<div class="a " style="left:1019px;top:517px;width:361px;height:1px;background:#fafafa"></div>
<div class="a t" style="left:1000px;top:528px;width:126px;text-align:right;">VLAN Mode:</div>
<div class="a fld" style="left:1132px;top:524px;width:229px;height:18px;"></div>
<div class="a t " style="left:1134px;top:528px;">no tag</div>
<div class="a " style="left:1362px;top:524px;width:18px;height:18px;background:#f0f0f0;border:1px solid #a0a0a0;box-shadow:inset 1px 1px 0 #fff"></div>
<svg class="a" style="left:1367px;top:529px" width="7" height="9"><path d="M0 0 H7 V1 H0 Z M2 2 H5 V4 H7 L3.5 8 L0 4 H2 Z" fill="#000"/></svg>
<div class="a t" style="left:1000px;top:553px;width:126px;text-align:right;">VLAN ID:</div>
<div class="a fld" style="left:1132px;top:549px;width:248px;height:18px;background:#fff"></div>
<div class="a t " style="left:1134px;top:553px;">1</div>
<div class="a " style="left:1019px;top:576px;width:361px;height:1px;background:#d8d8d8"></div>
<div class="a " style="left:1019px;top:577px;width:361px;height:1px;background:#fafafa"></div>
<div class="a t" style="left:1000px;top:589px;width:126px;text-align:right;">Default AP Tx Rate:</div>
<div class="a fld" style="left:1132px;top:585px;width:201px;height:18px;background:#f0f0f0"></div>
<div class="a t " style="left:1134px;top:589px;"></div>
<div class="a t " style="left:1360px;top:589px;">bps</div>
<svg class="a" style="left:1337px;top:591px" width="10" height="6"><path d="M0 0 H10 L5 6 Z" fill="#000"/></svg>
<div class="a t" style="left:1000px;top:615px;width:126px;text-align:right;">Default Client Tx Rate:</div>
<div class="a fld" style="left:1132px;top:611px;width:201px;height:18px;background:#f0f0f0"></div>
<div class="a t " style="left:1134px;top:615px;"></div>
<div class="a t " style="left:1360px;top:615px;">bps</div>
<svg class="a" style="left:1337px;top:617px" width="10" height="6"><path d="M0 0 H10 L5 6 Z" fill="#000"/></svg>
<div class="a " style="left:1019px;top:639px;width:361px;height:1px;background:#d8d8d8"></div>
<div class="a " style="left:1019px;top:640px;width:361px;height:1px;background:#fafafa"></div>
<div class="a " style="left:1132px;top:647px;width:12px;height:12px;background:#fff;border:1px solid #333"></div>
<svg class="a" style="left:1134px;top:649px" width="8" height="8"><path d="M0.8 3.8 L3 6.2 L7.2 1" stroke="#000" stroke-width="1.7" fill="none"/></svg>
<div class="a t " style="left:1148px;top:647px;">Default Authenticate</div>
<div class="a " style="left:1132px;top:667px;width:12px;height:12px;background:#fff;border:1px solid #333"></div>
<div class="a t " style="left:1148px;top:667px;">Default Forward</div>
<div class="a " style="left:1019px;top:688px;width:361px;height:1px;background:#d8d8d8"></div>
<div class="a " style="left:1019px;top:689px;width:361px;height:1px;background:#fafafa"></div>
<div class="a t" style="left:1000px;top:700px;width:126px;text-align:right;">Multicast Helper:</div>
<div class="a fld" style="left:1132px;top:696px;width:229px;height:18px;"></div>
<div class="a t " style="left:1134px;top:700px;">full</div>
<div class="a " style="left:1362px;top:696px;width:18px;height:18px;background:#f0f0f0;border:1px solid #a0a0a0;box-shadow:inset 1px 1px 0 #fff"></div>
<svg class="a" style="left:1367px;top:701px" width="7" height="9"><path d="M0 0 H7 V1 H0 Z M2 2 H5 V4 H7 L3.5 8 L0 4 H2 Z" fill="#000"/></svg>
<div class="a " style="left:1132px;top:722px;width:12px;height:12px;background:#fff;border:1px solid #333"></div>
<svg class="a" style="left:1134px;top:724px" width="8" height="8"><path d="M0.8 3.8 L3 6.2 L7.2 1" stroke="#000" stroke-width="1.7" fill="none"/></svg>
<div class="a t " style="left:1148px;top:722px;">Multicast Buffering</div>
<div class="a " style="left:1132px;top:742px;width:12px;height:12px;background:#fff;border:1px solid #333"></div>
<svg class="a" style="left:1134px;top:744px" width="8" height="8"><path d="M0.8 3.8 L3 6.2 L7.2 1" stroke="#000" stroke-width="1.7" fill="none"/></svg>
<div class="a t " style="left:1148px;top:742px;">Keepalive Frames</div>
<div class="a t btn" style="left:1399px;top:127px;width:112px;height:23px;text-align:center;line-height:21px;padding-top:1px;;border-color:#000">OK</div>
<div class="a t btn" style="left:1399px;top:153px;width:112px;height:23px;text-align:center;line-height:21px;padding-top:1px;;">Cancel</div>
<div class="a t btn" style="left:1399px;top:179px;width:112px;height:23px;text-align:center;line-height:21px;padding-top:1px;;">Apply</div>
<div class="a t btn" style="left:1399px;top:211px;width:112px;height:23px;text-align:center;line-height:21px;padding-top:1px;;">Disable</div>
<div class="a t btn" style="left:1399px;top:237px;width:112px;height:23px;text-align:center;line-height:21px;padding-top:1px;;">Comment</div>
<div class="a t btn" style="left:1399px;top:269px;width:112px;height:23px;text-align:center;line-height:21px;padding-top:1px;;">Simple Mode</div>
<div class="a t btn" style="left:1399px;top:295px;width:112px;height:23px;text-align:center;line-height:21px;padding-top:1px;;">Torch</div>
<div class="a t btn" style="left:1399px;top:321px;width:112px;height:23px;text-align:center;line-height:21px;padding-top:1px;;">WPS Accept</div>
<div class="a t btn" style="left:1399px;top:347px;width:112px;height:23px;text-align:center;line-height:21px;padding-top:1px;;">WPS Client</div>
<div class="a t btn" style="left:1399px;top:373px;width:112px;height:23px;text-align:center;line-height:21px;padding-top:1px;;">Setup Repeater</div>
<div class="a t btn" style="left:1399px;top:399px;width:112px;height:23px;text-align:center;line-height:21px;padding-top:1px;;">Scan...</div>
<div class="a t btn" style="left:1399px;top:425px;width:112px;height:23px;text-align:center;line-height:21px;padding-top:1px;;">Freq. Usage...</div>
<div class="a t btn" style="left:1399px;top:451px;width:112px;height:23px;text-align:center;line-height:21px;padding-top:1px;;">Align...</div>
<div class="a t btn" style="left:1399px;top:477px;width:112px;height:23px;text-align:center;line-height:21px;padding-top:1px;;">Sniff...</div>
<div class="a t btn" style="left:1399px;top:503px;width:112px;height:23px;text-align:center;line-height:21px;padding-top:1px;;">Snooper...</div>
<div class="a t btn" style="left:1399px;top:529px;width:112px;height:23px;text-align:center;line-height:21px;padding-top:1px;;">Reset Configuration</div>
<div class="a " style="left:1010px;top:834px;width:101px;height:19px;border-left:1px solid #a0a0a0;border-top:1px solid #a0a0a0;border-right:1px solid #fff;border-bottom:1px solid #fff"></div>
<div class="a t " style="left:1013px;top:838px;color:#000">enabled</div>
<div class="a " style="left:1113px;top:834px;width:101px;height:19px;border-left:1px solid #a0a0a0;border-top:1px solid #a0a0a0;border-right:1px solid #fff;border-bottom:1px solid #fff"></div>
<div class="a t " style="left:1116px;top:838px;color:#000">running</div>
<div class="a " style="left:1216px;top:834px;width:101px;height:19px;border-left:1px solid #a0a0a0;border-top:1px solid #a0a0a0;border-right:1px solid #fff;border-bottom:1px solid #fff"></div>
<div class="a t " style="left:1219px;top:838px;color:#a0a0a0">slave</div>
<div class="a " style="left:1319px;top:834px;width:85px;height:19px;border-left:1px solid #a0a0a0;border-top:1px solid #a0a0a0;border-right:1px solid #fff;border-bottom:1px solid #fff"></div>
<div class="a t " style="left:1322px;top:838px;color:#000">running ap</div>
<div class="a " style="left:1406px;top:834px;width:108px;height:19px;border-left:1px solid #a0a0a0;border-top:1px solid #a0a0a0;border-right:1px solid #fff;border-bottom:1px solid #fff"></div>
<div class="a t " style="left:1409px;top:838px;color:#000"></div>
</body></html>
